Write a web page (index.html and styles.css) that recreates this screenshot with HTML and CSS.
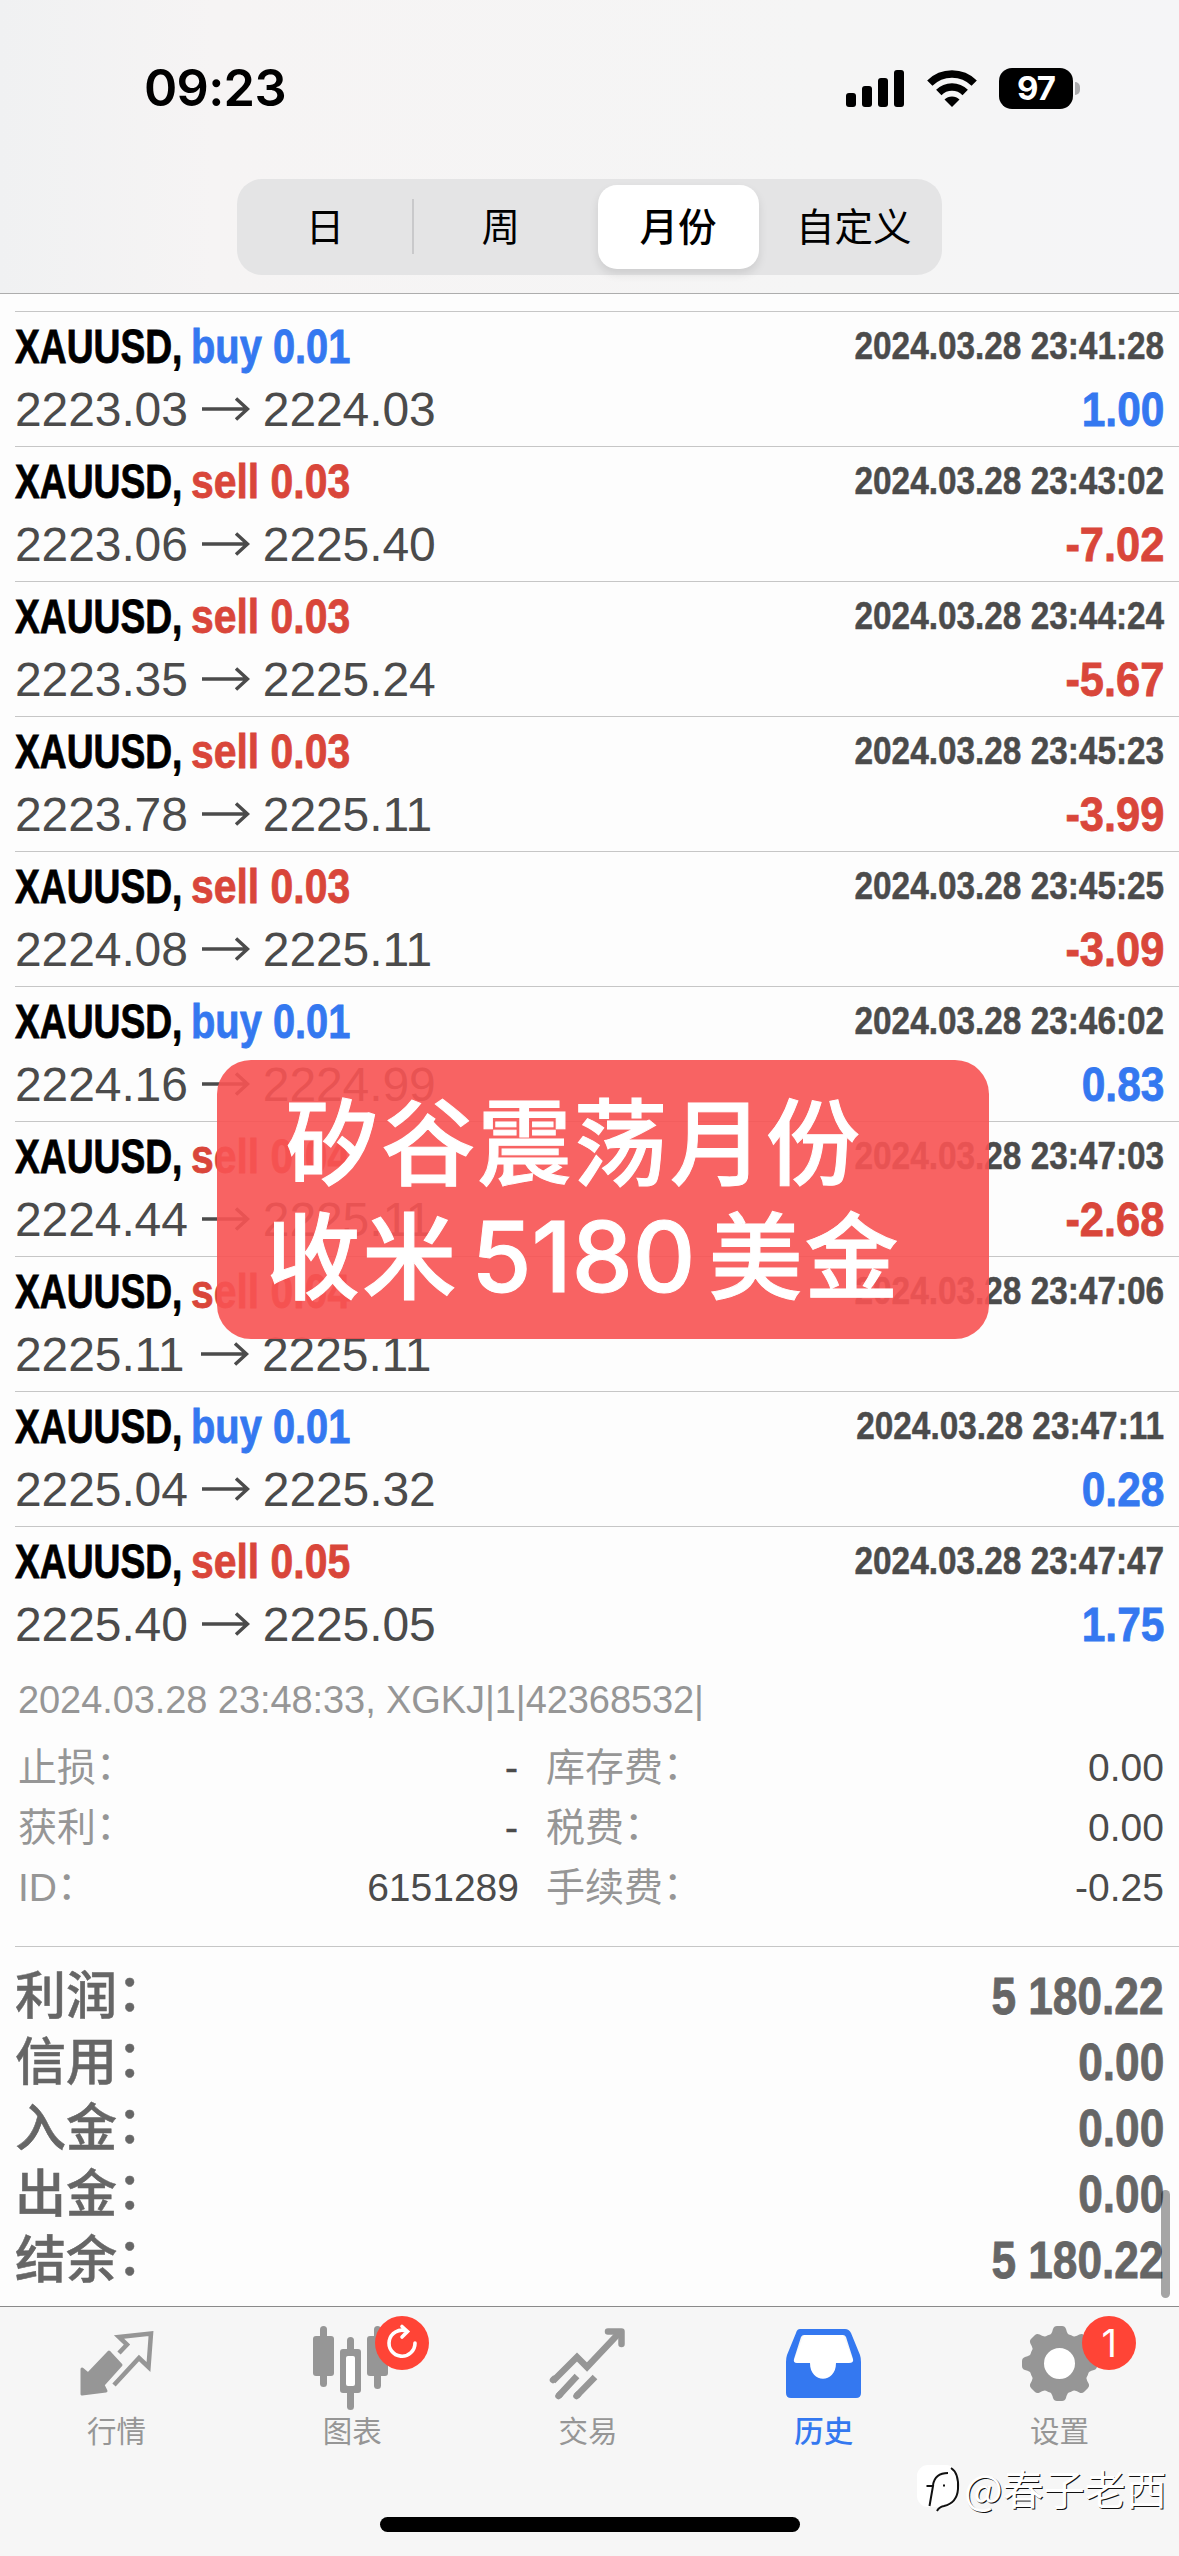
FILE: index.html
```html
<!DOCTYPE html>
<html lang="zh-CN">
<head>
<meta charset="utf-8">
<title>历史</title>
<link rel="stylesheet" href="styles.css">
</head>
<body>
<div class="screen">
  <header class="top">
    <div class="status">
      <span class="clock">09:23</span>
      <div class="indicators">
        <svg class="signal" viewBox="0 0 58 37"><rect x="0" y="23" width="10" height="14" rx="3"/><rect x="16" y="16" width="10" height="21" rx="3"/><rect x="32" y="8" width="10" height="29" rx="3"/><rect x="48" y="0" width="10" height="37" rx="3"/></svg>
        <svg class="wifi" viewBox="0 0 50 37"><path d="M25 37 L17.5 29.5 A10.6 10.6 0 0 1 32.5 29.5 Z"/><path d="M11.800 22.500 A18.500 18.500 0 0 1 38.200 22.500" class="arc"/><path d="M2.800 13.200 A31.500 31.500 0 0 1 47.200 13.200" class="arc"/></svg>
        <span class="battery">97</span><span class="tip"></span>
      </div>
    </div>
    <nav class="segments">
      <span class="segment">日</span>
      <span class="segment ruled">周</span>
      <span class="segment chosen">月份</span>
      <span class="segment">自定义</span>
    </nav>
  </header>

  <main class="history">
    <ul class="deals" id="deals"></ul>
    <section class="details">
      <p class="note">2024.03.28 23:48:33, XGKJ|1|42368532|</p>
      <div class="pairs">
        <span class="key">止损<i>：</i></span><span class="num dash">-</span><span class="key">库存费<i>：</i></span><span class="num">0.00</span>
        <span class="key">获利<i>：</i></span><span class="num dash">-</span><span class="key">税费<i>：</i></span><span class="num">0.00</span>
        <span class="key">ID<i>：</i></span><span class="num">6151289</span><span class="key">手续费<i>：</i></span><span class="num">-0.25</span>
      </div>
    </section>
    <section class="totals">
      <div class="total"><span>利润<i>：</i></span><b>5 180.22</b></div>
      <div class="total"><span>信用<i>：</i></span><b>0.00</b></div>
      <div class="total"><span>入金<i>：</i></span><b>0.00</b></div>
      <div class="total"><span>出金<i>：</i></span><b>0.00</b></div>
      <div class="total"><span>结余<i>：</i></span><b>5 180.22</b></div>
    </section>
    <div class="scrollbar"></div>
  </main>

  <footer class="tabs">
    <div class="tab">
      <svg class="icon" viewBox="0 0 80 80"><path class="fill" stroke-width="3" stroke-linejoin="round" stroke="#969696" d="M33 28 L45 41 L27 61 L30 67 L6 70 V45 L12 50 Z"/><path class="line" stroke-width="4.5" d="M43 29 L51 20.500 L43 13 L75 9.500 L72.500 43 L63 34 L38 61"/></svg>
      <span>行情</span>
    </div>
    <div class="tab">
      <svg class="icon" viewBox="0 0 80 80"><g class="fill"><rect x="1" y="12" width="21" height="40" rx="3"/><rect x="8" y="2" width="7" height="61" rx="3.5"/><rect x="55" y="12" width="21" height="40" rx="3"/><rect x="62" y="2" width="7" height="63" rx="3.5"/><rect x="28" y="25" width="21" height="44" rx="3"/><rect x="35" y="13" width="7" height="18" rx="3.5"/><rect x="35" y="62" width="7" height="24" rx="3.5"/></g><rect x="34" y="32" width="9" height="30" rx="2" fill="#fff"/></svg>
      <span>图表</span>
      <em class="badge"><svg viewBox="0 0 54 54"><path d="M40 27 A13 13 0 1 1 31 14.800 M27 10.500 L32.500 15.500 L27 21"/></svg></em>
    </div>
    <div class="tab">
      <svg class="icon" viewBox="0 0 80 80"><path class="line" stroke-width="6.500" d="M5 57 L29 33 L39 43 L73 7"/><path class="line" stroke-width="6.500" stroke-linecap="round" stroke-linejoin="round" d="M60 7.500 H73.500 V20 M5 56 L6 55 M10.500 72 L12 70.500 M28.500 72 L30 70.500"/><path class="line" stroke-width="6.500" d="M10.500 72 L29 52 M28.500 72 L47 53"/></svg>
      <span>交易</span>
    </div>
    <div class="tab active">
      <svg class="icon" viewBox="0 0 80 80"><path fill="#fff" d="M20 10 H59 L70 39 H52 V56 H26 V39 H9 Z"/><path fill="#3478f0" fill-rule="evenodd" d="M16 5 H61 Q65 5 67 9 L76 31 Q77 34 77 38 V69 Q77 74 72 74 H7 Q2 74 2 69 V38 Q2 34 3 31 L12 9 Q13 5 16 5 Z M20 11 Q18 11 17 13 L10 35 Q9 39 13 39 H26 C26 60 52 60 52 39 H65 Q70 39 69 35 L62 13 Q61 11 59 11 Z"/></svg>
      <span>历史</span>
    </div>
    <div class="tab">
      <svg class="icon" viewBox="0 0 80 80"><g class="fill"><g id="teeth"><path id="t" d="M27 15 Q32 10 33 5 Q34 2 37 2 H42 Q45 2 46 5 Q47 10 52 15 Z"/><use href="#t" transform="rotate(45 39.500 39.500)"/><use href="#t" transform="rotate(90 39.500 39.500)"/><use href="#t" transform="rotate(135 39.500 39.500)"/></g><use href="#teeth" transform="rotate(180 39.500 39.500)"/></g><circle cx="39.5" cy="39.5" r="23" fill="#fff" stroke="#969696" stroke-width="15"/></svg>
      <span>设置</span>
      <em class="badge">1</em>
    </div>
    <div class="home"></div>
  </footer>

  <div class="banner"><p>矽谷震荡月份</p><p class="second">收米<b>5180</b>美金</p></div>
  <div class="mark">
    <svg viewBox="0 0 42 50"><rect width="40" height="42" rx="11" fill="#fff"/><path d="M12.500 41 L16 21 H9.500 M16 20 Q18 8 31 8 M26 20.500 H28"/><path d="M34 3 Q42 8 41 24 Q40 38 27 41 Q22 42 20 46"/></svg>
    <span>@春子老西</span>
  </div>
</div>
<script src="deals.js"></script>
</body>
</html>
```
FILE: deals.js
```js
const deals = [
  ["buy", "0.01", "2223.03", "2224.03", "23:41:28", "1.00"],
  ["sell", "0.03", "2223.06", "2225.40", "23:43:02", "-7.02"],
  ["sell", "0.03", "2223.35", "2225.24", "23:44:24", "-5.67"],
  ["sell", "0.03", "2223.78", "2225.11", "23:45:23", "-3.99"],
  ["sell", "0.03", "2224.08", "2225.11", "23:45:25", "-3.09"],
  ["buy", "0.01", "2224.16", "2224.99", "23:46:02", "0.83"],
  ["sell", "0.04", "2224.44", "2225.11", "23:47:03", "-2.68"],
  ["sell", "0.04", "2225.11", "2225.11", "23:47:06", ""],
  ["buy", "0.01", "2225.04", "2225.32", "23:47:11", "0.28"],
  ["sell", "0.05", "2225.40", "2225.05", "23:47:47", "1.75"]
];

document.getElementById("deals").innerHTML = deals.map(([side, lots, open, close, time, profit]) => `
  <li class="deal">
    <div class="line-one">
      <span class="symbol"><b>XAUUSD,</b></span>
      <span class="side ${side}">${side} ${lots}</span>
      <span class="time">2024.03.28 ${time}</span>
    </div>
    <div class="line-two">
      <span class="price">${open}</span>
      <svg viewBox="0 0 48 24"><path d="M0 12 H45 M34 1.500 L45.500 12 L34 22.500"/></svg>
      <span class="price">${close}</span>
      <span class="profit ${profit.startsWith("-") ? "sell" : "buy"}">${profit}</span>
    </div>
  </li>`).join("");
```
FILE: styles.css
```css
* { box-sizing: border-box; margin: 0; padding: 0; }
body { background: #fdfdfd; }
i, em { font-style: normal; }

.screen {
  position: relative;
  display: flex;
  flex-direction: column;
  width: 1179px;
  height: 2556px;
  overflow: hidden;
  background: #fdfdfd;
  color: #4b4b4b;
  font-family: "Liberation Sans", "Noto Sans CJK SC", sans-serif;
}

/* header */
.top {
  height: 294px;
  border-bottom: 1px solid #adadad;
  background: linear-gradient(90deg, #f0f1f2, #f6f4f4 18%, #f5f5f5 70%, #f5f5f7);
}
.status {
  display: flex;
  justify-content: space-between;
  height: 179px;
  padding: 57px 98px 0 144px;
}
.clock {
  color: #000;
  font: 600 50.5px/62px Inter, sans-serif;
  letter-spacing: -0.7px;
}
.indicators { display: flex; align-items: center; height: 62px; }
.signal { width: 58px; height: 37px; }
.wifi { width: 50px; height: 37px; margin: 0 22px 0 23px; }
.wifi .arc { fill: none; stroke: #000; stroke-width: 7.5; }
.battery {
  width: 74px;
  height: 41px;
  border-radius: 13px;
  background: #000;
  color: #fff;
  font: 700 33px/41px Inter, sans-serif;
  letter-spacing: -1px;
  text-align: center;
}
.tip { width: 5px; height: 13px; margin: 0 1px 0 2px; border-radius: 0 6px 6px 0; background: #ababad; }

.segments {
  display: grid;
  grid-template-columns: repeat(4, 1fr);
  width: 705px;
  height: 96px;
  margin-left: 237px;
  border-radius: 25px;
  background: #e4e4e5;
  color: #000;
  font: 400 38.5px/91px "Noto Sans CJK SC", sans-serif;
  text-align: center;
}
.ruled {
  background: linear-gradient(#c9c9cb, #c9c9cb) left 20px / 2px 55px no-repeat;
  margin-left: -1px;
}
.chosen {
  height: 84px;
  margin: 6px 7px 6px 8px;
  border-radius: 19px;
  background: #fff;
  box-shadow: 0 5px 10px rgba(0, 0, 0, .1);
  font-weight: 500;
  line-height: 79px;
}

/* deals */
.history { position: relative; height: 2012px; padding: 17px 0 0 15px; }
.deals { list-style: none; }
.deal { height: 135px; padding-right: 15px; border-top: 1px solid #c6c6c6; }
.line-one, .line-two { display: flex; align-items: flex-start; white-space: nowrap; }
.line-one { height: 64px; line-height: 70px; font-size: 48px; font-weight: 700; }
.symbol { width: 176px; color: #000; }
.symbol b { display: inline-block; transform: scaleX(.775); transform-origin: left; }
.symbol b, .side, .profit, .total b { -webkit-text-stroke: .8px currentColor; }
.side { transform: scaleX(.852); transform-origin: left; }
.side.buy { transform: scaleX(.83); }
.time {
  margin-left: auto;
  font-size: 39px;
  line-height: 68px;
  transform: scaleX(.855);
  transform-origin: right;
  -webkit-text-stroke: .5px currentColor;
}
.line-two { height: 70px; line-height: 67px; font-size: 48px; }
.line-two svg { width: 48px; height: 24px; margin: 0 13px 0 14px; transform: translateY(21px); }
.line-two path { fill: none; stroke: #4b4b4b; stroke-width: 3.5; }
.price { min-width: 172px; letter-spacing: -.1px; }
.profit { margin-left: auto; font-weight: 700; transform: scaleX(.885); transform-origin: right; }
.profit.sell { transform: scaleX(.905); }
.buy { color: #3478f0; }
.sell { color: #d9463a; }

/* order details */
.details { height: 285px; padding: 0 15px 0 3px; color: #969696; }
.details, .totals { line-height: 60px; }
.note { padding-top: 9px; font-size: 38px; letter-spacing: -.08px; white-space: nowrap; }
.pairs {
  display: grid;
  grid-template-columns: 246px 255px 300px 1fr;
  grid-auto-rows: 60px;
  margin-top: 8px;
  font-size: 39px;
}
.key { white-space: nowrap; }
.key i, .total i { display: inline-block; width: 1em; line-height: 1; vertical-align: .06em; }
.num { color: #4b4b4b; text-align: right; }
.dash { padding-right: 1px; -webkit-text-stroke: .5px currentColor; }
.pairs .key:nth-child(4n + 3) { padding-left: 27px; }

/* totals */
.totals { padding: 17px 15px 0 0; border-top: 1px solid #c6c6c6; }
.total {
  display: flex;
  justify-content: space-between;
  align-items: baseline;
  height: 66px;
  color: #666;
  font-size: 51px;
  font-weight: 500;
  line-height: 66px;
}
.total span { -webkit-text-stroke: .5px currentColor; }
.total b { transform: scaleX(.867); transform-origin: right; }
.scrollbar {
  position: absolute;
  top: 1896px;
  right: 9px;
  width: 9px;
  height: 108px;
  border-radius: 5px;
  background: rgba(0, 0, 0, .35);
}

/* tab bar */
.tabs {
  position: relative;
  display: grid;
  grid-template-columns: repeat(5, 1fr);
  height: 250px;
  border-top: 1px solid #8a8a8a;
  background: #f6f6f6;
}
.tab {
  position: relative;
  display: flex;
  flex-direction: column;
  align-items: center;
  padding: 17px 3px 0 0;
  color: #969696;
  font: 400 29.5px/40px "Noto Sans CJK SC", sans-serif;
}
.tab span { margin-top: 5px; }
.icon { width: 80px; height: 80px; overflow: visible; }
.fill { fill: #969696; }
.line { fill: none; stroke: #969696; }
.active { color: #3478f0; font-weight: 500; }
.badge {
  position: absolute;
  top: 9px;
  left: 139px;
  width: 54px;
  height: 54px;
  border-radius: 27px;
  background: #ff4436;
  color: #fff;
  font: 400 38px/54px Inter, sans-serif;
  text-align: center;
}
.badge svg { display: block; }
.badge path { fill: none; stroke: #fff; stroke-width: 3.6; stroke-linecap: round; }
.home {
  position: absolute;
  left: 380px;
  bottom: 24px;
  width: 420px;
  height: 15px;
  border-radius: 8px;
  background: #000;
}

/* promotional banner laid over the list */
.banner {
  position: absolute;
  top: 1060px;
  left: 217px;
  width: 772px;
  height: 279px;
  padding: 20px 0 0 68px;
  border-radius: 34px;
  background: rgba(247, 84, 84, .91);
  color: #fff;
  font: 500 94px/114px "Noto Sans CJK SC", sans-serif;
  letter-spacing: 2.2px;
  white-space: nowrap;
  -webkit-text-stroke: 1px #fff;
}
.second { margin-left: -19px; }
.banner b {
  display: inline-block;
  width: 250px;
  text-align: center;
  font: 500 97px/1 Inter, sans-serif;
  letter-spacing: 0;
}

/* watermark */
.mark {
  position: absolute;
  top: 2457px;
  left: 917px;
  display: flex;
  align-items: center;
  gap: 5px;
  color: #fff;
  font: 400 41px/60px "Noto Sans CJK SC", sans-serif;
  text-shadow: 1px 1px 0 #111;
  white-space: nowrap;
}
.mark svg { width: 42px; height: 50px; margin-top: 6px; overflow: visible; }
.mark path { fill: none; stroke: #111; stroke-width: 2; }
```
